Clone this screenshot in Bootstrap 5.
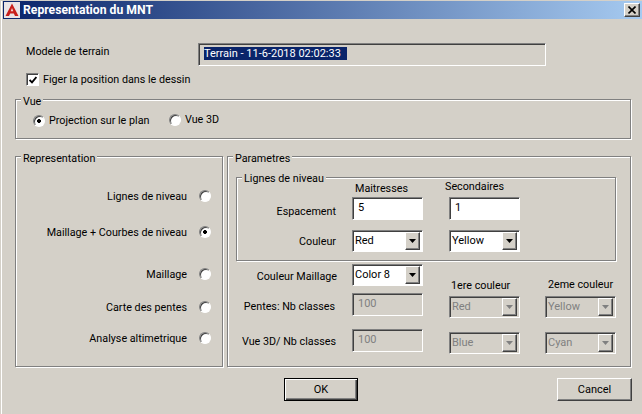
<!DOCTYPE html>
<html lang="fr">
<head>
<meta charset="utf-8">
<title>Representation du MNT</title>
<link href="https://cdn.jsdelivr.net/npm/bootstrap@5.3.0/dist/css/bootstrap.min.css" rel="stylesheet">
<style>
html,body{height:100%;overflow:hidden}
body{background:#d4d0c8;color:#000;font:10.75px/13px Roboto,"Noto Sans","Liberation Sans",sans-serif}
.dlg{height:413px;width:641px;margin-top:1px;border-left:1px solid #fff;margin-left:1px;padding-left:1px}
.ttl{height:18px;background:linear-gradient(90deg,#0a246a,#a6caf0);color:#fff;font-weight:700;font-size:12.2px;padding:0 2px 0 1px}
.ttl-txt{margin-left:3px}
.clz{width:16px;height:14px;background:#d4d0c8;border:1px solid;border-color:#fff #404040 #404040 #fff;box-shadow:inset -1px -1px 0 #808080}
.fld{background:#fff;border:1px solid;border-color:#808080 #fff #fff #808080;box-shadow:inset 1px 1px 0 #404040;padding:3px 0 0 5px;width:71px;height:23px;font-size:11px}
.fld.off{background:#d4d0c8;color:#808080}
.fld-wide{width:348px;background:#d4d0c8;padding:3px 0 0 5px;height:23px}
.hil{background:#0a246a;color:#fff;display:inline-block;line-height:13px;width:143px;white-space:nowrap}
.cmb{background:#fff;border:1px solid;border-color:#808080 #fff #fff #808080;box-shadow:inset 1px 1px 0 #404040;width:71px;height:22px;padding:1px 2px 1px 1px;font-size:11px}
.cmb.off{background:#d4d0c8;color:#808080}
.cmb-txt{padding-left:1px;line-height:18px}
.cmb-btn{width:15px;height:18px;background:#d4d0c8;border:1px solid;border-color:#fff #404040 #404040 #fff;box-shadow:inset -1px -1px 0 #808080}
.grp{position:relative;border:1px solid #808080;box-shadow:1px 1px 0 #fff,inset 1px 1px 0 #fff}
.grp-ttl{position:absolute;top:-5px;left:5px;background:#d4d0c8;padding:0 2px;line-height:13px}
.lig>.grp-ttl{top:-6px}
.rad,.chk{appearance:none;-webkit-appearance:none;flex:none;margin:0;background-color:#fff;display:block}
.rad{width:12px;height:12px;border-radius:50%;border:1px solid;border-color:#808080 #fff #fff #808080;box-shadow:inset 1px 1px 0 #404040}
.rad:checked{background:radial-gradient(circle at 5px 5px,#000 0 1.6px,#fff 2.2px)}
.chk{width:13px;height:13px;border:1px solid;border-color:#808080 #fff #fff #808080;box-shadow:inset 1px 1px 0 #404040}
.tick{position:absolute;left:3px;top:3px}
.box-chk{position:relative;width:13px;height:13px}
.top-row{margin:24px 0 0 23px}
.top-lbl{width:172px;padding-top:2px}
.chk-row{margin:7px 0 0 23px;gap:4px}
.vue{margin:13px 0 0 12px;width:616px;height:40px;padding:14px 0 0 17px}
.vue-a{gap:4px;width:136px}
.vue-b{gap:4px;margin-top:-1px}
.panels{margin:17px 0 0 12px;gap:4px}
.rep{width:208px;height:211px;display:grid;grid-template-rows:36px 42px 33px 31px 20px;padding:29px 11px 0 0;align-content:start}
.rep-row{gap:12px;height:20px}
.par{width:404px;height:211px;padding:20px 0 0 8px}
.lig{width:380px;height:84px;display:grid;grid-template-columns:99px 71px 97px;grid-template-rows:16px 33px 22px;column-gap:16px;padding-top:3px}
.sec{margin-left:10px}
.hd-a{padding:1px 0 0 3px;white-space:nowrap}
.hd-b{margin:-1px 0 0 6px;white-space:nowrap}
.lbl-r{text-align:right;white-space:nowrap}
.lbl-esp{padding-top:8px}
.low{margin-top:3px}
.low-l{width:187px;display:grid;grid-template-columns:101px 71px;column-gap:15px;grid-template-rows:22px 23px 23px;row-gap:7px}
.low-l>.fld:last-child{margin-top:6px}
.lbl-mai{padding-top:6px}
.lbl-pen{padding:7px 2px 0 0}
.lbl-v3d{padding:12px 1px 0 0}
.c-a{margin-left:26px;padding-top:15px}
.c-a>div:first-child{padding-left:2px}
.c-b{margin-left:25px;padding-top:14px}
.first{margin-top:4px}
.c-b .first{margin-top:5px}
.next{margin-top:14px}
.foot{margin-top:11px}
.btn-w{--bs-btn-font-size:11px;--bs-btn-line-height:13px;--bs-btn-color:#000;--bs-btn-bg:#d4d0c8;--bs-btn-hover-bg:#d4d0c8;--bs-btn-hover-color:#000;--bs-btn-border-radius:0;--bs-btn-padding-x:0;--bs-btn-padding-y:0;width:75px;height:23px;font-family:inherit;border:1px solid;border-color:#fff #404040 #404040 #fff;box-shadow:inset -1px -1px 0 #808080}
.btn-ok{margin-left:281px;width:74px;border:1px solid #000;box-shadow:inset 1px 1px 0 #fff,inset -1px -1px 0 #404040,inset -2px -2px 0 #808080}
.btn-no{margin-left:199px}
</style>
</head>
<body>
<div class="dlg">
  <div class="ttl d-flex align-items-center">
    <svg width="16" height="16" viewBox="0 0 16 16"><rect width="16" height="16" fill="#e9e4e6"/><path d="M8 1.5 14.5 14H11L9.8 11.5H6.2L5 14H1.5Z" fill="#c8201c"/><path d="M8 6 9.3 9.3H6.7Z" fill="#f3d8d6"/></svg>
    <span class="ttl-txt flex-grow-1">Representation du MNT</span>
    <span class="clz d-flex align-items-center justify-content-center"><svg width="8" height="8" viewBox="0 0 8 8"><path d="M.5.5 7.5 7.5M7.5.5.5 7.5" stroke="#000" stroke-width="1.6"/></svg></span>
  </div>

  <div class="top-row d-flex">
    <div class="top-lbl">Modele de terrain</div>
    <div class="fld fld-wide"><span class="hil">Terrain - 11-6-2018 02:02:33</span></div>
  </div>

  <div class="chk-row d-flex align-items-center">
    <span class="box-chk"><input class="chk" type="checkbox" checked aria-label="Figer"><svg class="tick" width="8" height="8" viewBox="0 0 8 8"><path d="M.6 4 3 6.4 7.4 1" fill="none" stroke="#000" stroke-width="1.8"/></svg></span>
    <span>Figer la position dans le dessin</span>
  </div>

  <div class="grp vue d-flex align-items-start">
    <span class="grp-ttl">Vue</span>
    <label class="vue-a d-flex align-items-center"><input class="rad" type="radio" name="v" checked><span>Projection sur le plan</span></label>
    <label class="vue-b d-flex align-items-center"><input class="rad" type="radio" name="v"><span>Vue 3D</span></label>
  </div>

  <div class="panels d-flex">
    <div class="grp rep">
      <span class="grp-ttl">Representation</span>
      <label class="rep-row d-flex justify-content-end align-items-center"><span>Lignes de niveau</span><input class="rad" type="radio" name="r"></label>
      <label class="rep-row d-flex justify-content-end align-items-center"><span>Maillage + Courbes de niveau</span><input class="rad" type="radio" name="r" checked></label>
      <label class="rep-row d-flex justify-content-end align-items-center"><span>Maillage</span><input class="rad" type="radio" name="r"></label>
      <label class="rep-row d-flex justify-content-end align-items-center"><span>Carte des pentes</span><input class="rad" type="radio" name="r"></label>
      <label class="rep-row d-flex justify-content-end align-items-center"><span>Analyse altimetrique</span><input class="rad" type="radio" name="r"></label>
    </div>

    <div class="grp par">
      <span class="grp-ttl">Parametres</span>
      <div class="grp lig">
        <span class="grp-ttl">Lignes de niveau</span>
        <span></span><span class="hd-a">Maitresses</span><span class="hd-b">Secondaires</span>
        <span class="lbl-r lbl-esp">Espacement</span>
        <div class="fld">5</div>
        <div class="fld sec">1</div>
        <span class="lbl-r align-self-center">Couleur</span>
        <div class="cmb d-flex justify-content-between"><span class="cmb-txt">Red</span><span class="cmb-btn d-flex align-items-center justify-content-center"><svg width="7" height="4" viewBox="0 0 7 4"><path d="M0 0H7L3.5 4Z" fill="#000"/></svg></span></div>
        <div class="cmb sec d-flex justify-content-between"><span class="cmb-txt">Yellow</span><span class="cmb-btn d-flex align-items-center justify-content-center"><svg width="7" height="4" viewBox="0 0 7 4"><path d="M0 0H7L3.5 4Z" fill="#000"/></svg></span></div>
      </div>

      <div class="low d-flex">
        <div class="low-l">
          <span class="lbl-r lbl-mai">Couleur Maillage</span>
          <div class="cmb d-flex justify-content-between"><span class="cmb-txt">Color 8</span><span class="cmb-btn d-flex align-items-center justify-content-center"><svg width="7" height="4" viewBox="0 0 7 4"><path d="M0 0H7L3.5 4Z" fill="#000"/></svg></span></div>
          <span class="lbl-r lbl-pen">Pentes: Nb classes</span>
          <div class="fld off">100</div>
          <span class="lbl-r lbl-v3d">Vue 3D/ Nb classes</span>
          <div class="fld off">100</div>
        </div>
        <div class="c-a">
          <div>1ere couleur</div>
          <div class="cmb off first d-flex justify-content-between"><span class="cmb-txt">Red</span><span class="cmb-btn d-flex align-items-center justify-content-center"><svg width="7" height="4" viewBox="0 0 7 4"><path d="M0 0H7L3.5 4Z" fill="#808080"/></svg></span></div>
          <div class="cmb off next d-flex justify-content-between"><span class="cmb-txt">Blue</span><span class="cmb-btn d-flex align-items-center justify-content-center"><svg width="7" height="4" viewBox="0 0 7 4"><path d="M0 0H7L3.5 4Z" fill="#808080"/></svg></span></div>
        </div>
        <div class="c-b">
          <div class="text-center">2eme couleur</div>
          <div class="cmb off first d-flex justify-content-between"><span class="cmb-txt">Yellow</span><span class="cmb-btn d-flex align-items-center justify-content-center"><svg width="7" height="4" viewBox="0 0 7 4"><path d="M0 0H7L3.5 4Z" fill="#808080"/></svg></span></div>
          <div class="cmb off next d-flex justify-content-between"><span class="cmb-txt">Cyan</span><span class="cmb-btn d-flex align-items-center justify-content-center"><svg width="7" height="4" viewBox="0 0 7 4"><path d="M0 0H7L3.5 4Z" fill="#808080"/></svg></span></div>
        </div>
      </div>
    </div>
  </div>

  <div class="foot d-flex">
    <button type="button" class="btn btn-w btn-ok">OK</button>
    <button type="button" class="btn btn-w btn-no">Cancel</button>
  </div>
</div>
</body>
</html>
